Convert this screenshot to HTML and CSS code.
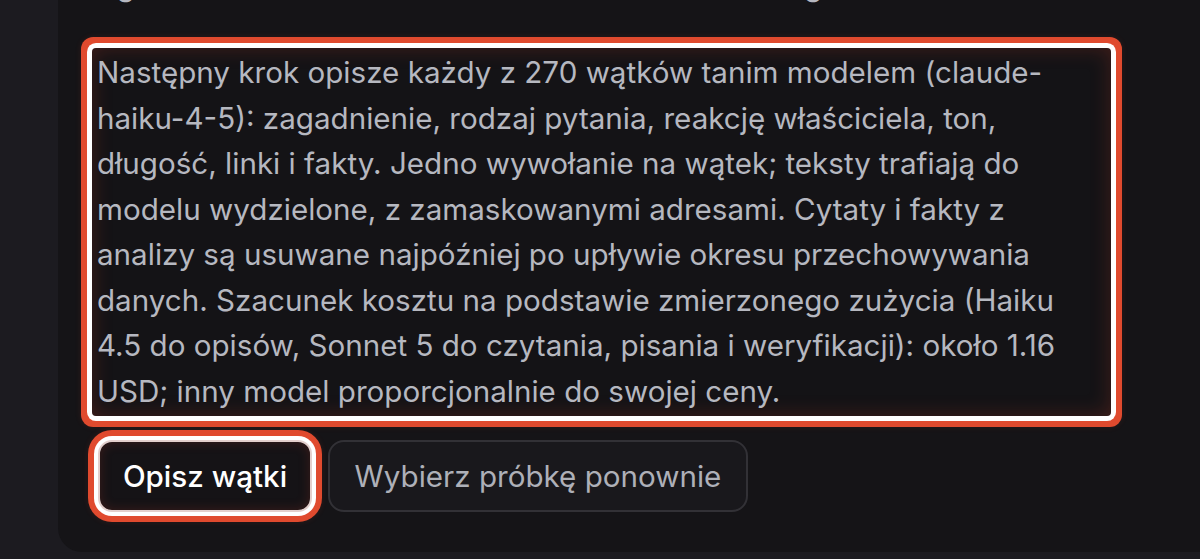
FILE: index.html
```html
<!DOCTYPE html>
<html lang="pl">
<head>
<meta charset="utf-8">
<title>Opisz wątki</title>
<link rel="stylesheet" href="styles.css">
</head>
<body>
<main class="card">
  <p class="intro">Zgodnie z ustawieniem losowano 270 tematów z ogółu.</p>
  <p class="note">Następny krok opisze każdy z 270 wątków tanim modelem (claude-haiku-4-5): zagadnienie, rodzaj pytania, reakcję właściciela, ton, długość, linki i fakty. Jedno wywołanie na wątek; teksty trafiają do modelu wydzielone, z zamaskowanymi adresami. Cytaty i fakty z analizy są usuwane najpóźniej po upływie okresu przechowywania danych. Szacunek kosztu na podstawie zmierzonego zużycia (Haiku 4.5 do opisów, Sonnet 5 do czytania, pisania i weryfikacji): około 1.16 USD; inny model proporcjonalnie do swojej ceny.</p>
  <div class="actions">
    <button class="btn btn-primary" type="button">Opisz wątki</button>
    <button class="btn btn-secondary" type="button">Wybierz próbkę ponownie</button>
  </div>
</main>
</body>
</html>
```

FILE: styles.css
```css
html, body {
  margin: 0;
  padding: 0;
  height: 100%;
}

body {
  background: #1c1b20;
  overflow: hidden;
  font-family: Inter, "Noto Sans", "Liberation Sans", sans-serif;
  font-size: 29.6px;
  line-height: 45.5px;
  color: #b6b8c0;
}

.card {
  background: #151417;
  margin: 0 -80px 0 58px;
  padding: 0 120px 40px 40px;
  border-radius: 0 0 0 24px;
}

.intro {
  margin: -37px 0 0 0;
  color: #b6b8c0;
  white-space: nowrap;
}

.note {
  margin: 39.5px 0 0 -6px;
  width: 1019px;
  box-sizing: border-box;
  padding: 2px 30px 2px 5px;
  background: #141316;
  border-radius: 4px;
  color: #b6b8c0;
  box-shadow:
    inset 0 0 20px rgba(200, 60, 40, 0.26),
    0 0 0 5px #ffffff,
    0 0 0 11px #e04a2e,
    0 0 6px 11px rgba(224, 74, 46, 0.12);
}

.actions {
  display: flex;
  align-items: center;
  gap: 16px;
  margin-top: 24px;
}

.btn {
  font-family: inherit;
  font-size: 29.6px;
  line-height: 36px;
  height: 72px;
  box-sizing: border-box;
  border-radius: 14px;
  cursor: pointer;
}

.btn-primary {
  width: 214px;
  padding: 0 10px;
  font-weight: 500;
  color: #ffffff;
  background: #151316;
  border: 2px solid #e3cfcc;
  box-shadow:
    inset 0 0 12px rgba(200, 60, 40, 0.22),
    0 0 0 4px #ffffff,
    0 0 0 10px #e04a2e,
    0 0 6px 10px rgba(224, 74, 46, 0.12);
}

.btn-secondary {
  width: 420px;
  padding: 0 10px;
  font-weight: 400;
  color: #aeb0b8;
  background: #19181c;
  border: 2px solid #323136;
  border-radius: 16px;
}
```
